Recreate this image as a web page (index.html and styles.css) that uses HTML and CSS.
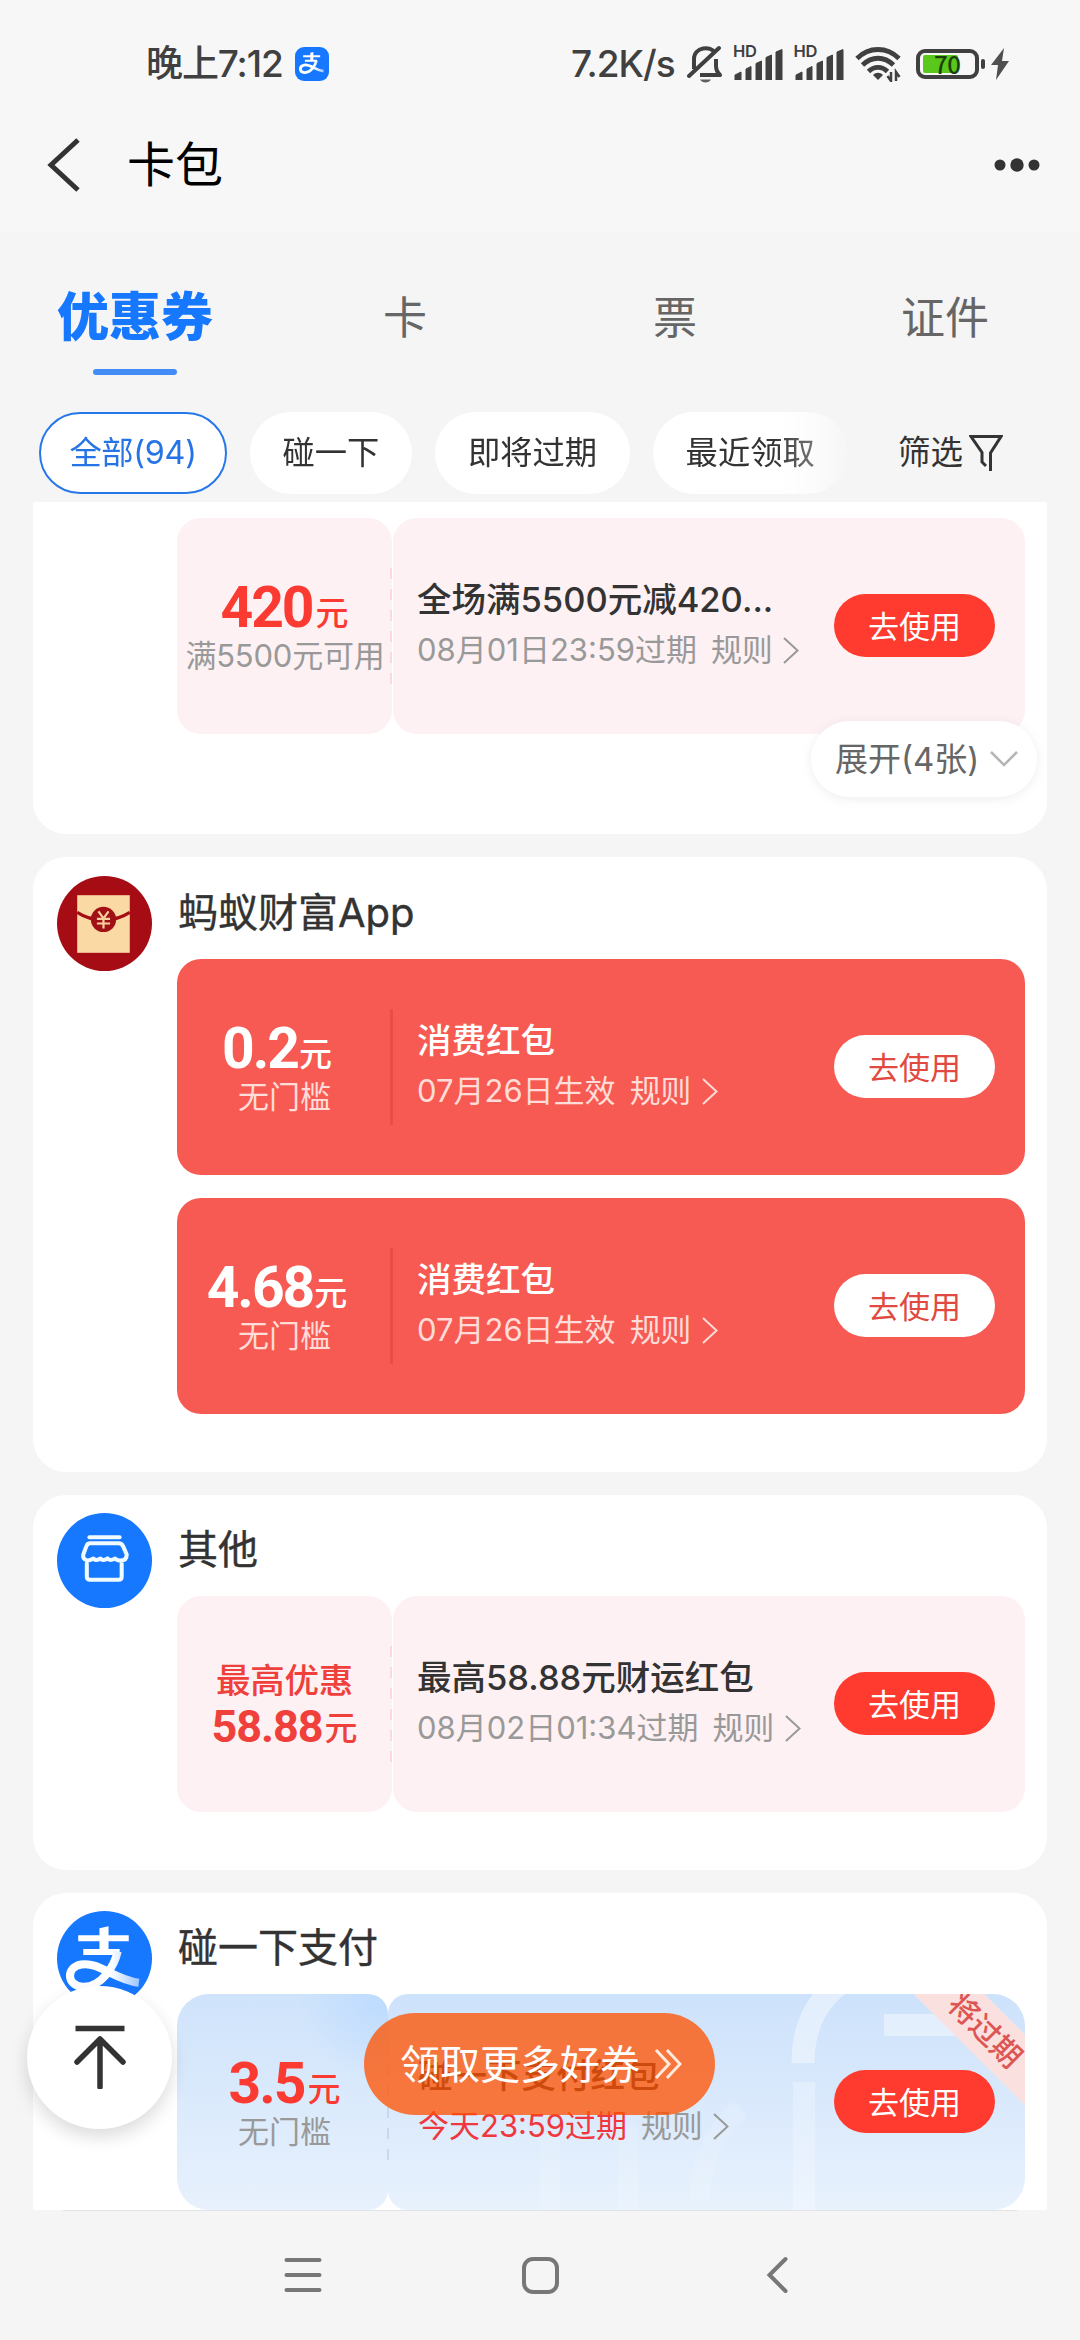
FILE: index.html
```html
<!DOCTYPE html>
<html lang="zh-CN">
<head>
<meta charset="utf-8">
<title>卡包</title>
<link rel="stylesheet" href="styles.css">
</head>
<body>
<svg class="defs" width="0" height="0" aria-hidden="true">
  <defs>
    <linearGradient id="tail" x1="0" y1="0" x2="1" y2="0"><stop offset="0.6" stop-color="#fff"/><stop offset="1" stop-color="#9fc6ff"/></linearGradient>
    <symbol id="alipay" viewBox="0 0 94 94">
      <path d="M21 27H71M26 40.5H62" fill="none" stroke="#fff" stroke-width="6"/>
      <path d="M42 17L51 15V40H42Z" fill="#fff"/>
      <path d="M60 40C57 54 44 76 25 75C10 74 8 56 24 53C42 50 56 68 81 71" fill="none" stroke="url(#tail)" stroke-width="8"/>
    </symbol>
    <symbol id="chev" viewBox="0 0 16 27"><path d="M1 1L14.500 13.500L1 26" fill="none" stroke="currentColor" stroke-width="2"/></symbol>
    <symbol id="signal" viewBox="0 0 50 34">
      <path d="M2 34V29L8 26V34ZM13 34V23L18 20.500V34ZM23 34V17.500L28.500 15V34ZM33 34V11.500L38.500 9V34ZM43 34V6L49 3.500V34Z" fill="#404040" stroke="#404040" stroke-linejoin="round"/>
    </symbol>
  </defs>
</svg>
<div class="screen">
  <header class="top">
    <div class="status">
      <span class="time">晚上7:12</span>
      <svg class="app" viewBox="0 0 34 34"><rect width="34" height="34" rx="9" fill="#1677ff"/><use href="#alipay" x="1" y="0" width="32" height="32"/></svg>
      <span class="speed">7.2K/s</span>
      <svg class="bell" viewBox="0 0 36 38" fill="none" stroke="#404040" stroke-width="4">
        <path d="M7 24V14C7 2 24 0 28 8M29 14V21C29 25 31 28 33 30H13" stroke-linejoin="round"/><path d="M2 31L32 3" stroke-linecap="round"/><path d="M13 34.500H24C22 38.500 15 38.500 13 34.500Z" fill="#606060" stroke="none"/>
      </svg>
      <span class="sig"><b>HD</b><svg viewBox="0 0 50 34"><use href="#signal"/></svg></span>
      <span class="sig"><b>HD</b><svg viewBox="0 0 50 34"><use href="#signal"/></svg></span>
      <svg class="wifi" viewBox="0 0 46 36" fill="none" stroke="#404040" stroke-width="4.800">
        <path d="M2 12.500C14 .500 32 .500 44 12.500M7.500 19C17 10 29 10 38.500 19M13.500 25.500C19 20 27 20 32.500 25.500"/><path d="M18 29C21 26 25 26 28 29L23 34Z" fill="#404040" stroke="none"/><path d="M36 26V35L32.500 30M41 35V26L44.500 31" stroke-width="2.500"/>
      </svg>
      <span class="battery"><i></i><em>70</em></span>
      <svg class="bolt" viewBox="0 0 18 32"><path d="M13 0L0 17H7L5 32L18 13H11Z" fill="#505050"/></svg>
    </div>
    <div class="titlebar">
      <svg class="back" viewBox="0 0 34 54"><path d="M31 2L4 27L31 52" fill="none" stroke="#333" stroke-width="5"/></svg>
      <h1>卡包</h1>
      <svg class="more" viewBox="0 0 48 14" fill="#333"><circle cx="7" cy="7" r="5.500"/><circle cx="24" cy="7" r="6.700"/><circle cx="41" cy="7" r="5.500"/></svg>
    </div>
  </header>
  <nav class="tabs">
    <span class="tab on">优惠券</span><span class="tab">卡</span><span class="tab">票</span><span class="tab">证件</span>
  </nav>
  <div class="filters">
    <div class="chips"><span class="chip on">全部(94)</span><span class="chip">碰一下</span><span class="chip">即将过期</span><span class="chip">最近领取</span></div>
    <span class="filter">筛选<svg viewBox="0 0 34 38" fill="none" stroke="#333" stroke-width="3"><path d="M21.500 37V19L32 2.500H2L13 18.500V28L17 32"/></svg></span>
  </div>
  <main class="list">
    <section class="card first">
      <div class="body">
        <article class="coupon pink">
          <div class="left"><p class="amt"><b>420</b>元</p><p class="cond wide">满5500元可用</p></div>
          <div class="right">
            <div class="info"><h3>全场满5500元减420...</h3><p>08月01日23:59过期<span>规则</span><svg><use href="#chev"/></svg></p></div>
            <button>去使用</button>
          </div>
          <i class="rule"></i>
          <a class="expand">展开(4张)<svg viewBox="0 0 28 16"><path d="M1 1L14 14L27 1" fill="none" stroke="#b5b5b5" stroke-width="2.500"/></svg></a>
        </article>
      </div>
    </section>
    <section class="card low">
      <svg class="avatar" viewBox="0 0 94 94">
        <circle cx="47" cy="47" r="47" fill="#a60c13"/><rect x="20" y="19" width="52" height="57" fill="#fbd9a5"/>
        <path d="M20 36C35 46 57 46 72 36" fill="none" stroke="#a60c13" stroke-width="3"/><circle cx="46" cy="43" r="12.500" fill="#a01015"/>
        <path d="M41 35L46 42L51 35M46 42V52M39.500 42.500H52.500M39.500 47H52.500" fill="none" stroke="#f5cf9e" stroke-width="2.200"/>
      </svg>
      <div class="body">
        <h2>蚂蚁财富App</h2>
        <article class="coupon red">
          <div class="left"><p class="amt"><b>0.2</b>元</p><p class="cond">无门槛</p></div>
          <div class="right">
            <div class="info"><h3>消费红包</h3><p>07月26日生效<span>规则</span><svg><use href="#chev"/></svg></p></div>
            <button>去使用</button>
          </div>
          <i class="rule"></i>
        </article>
        <article class="coupon red">
          <div class="left"><p class="amt"><b>4.68</b>元</p><p class="cond">无门槛</p></div>
          <div class="right">
            <div class="info"><h3>消费红包</h3><p>07月26日生效<span>规则</span><svg><use href="#chev"/></svg></p></div>
            <button>去使用</button>
          </div>
          <i class="rule"></i>
        </article>
      </div>
    </section>
    <section class="card">
      <svg class="avatar" viewBox="0 0 94 94"><circle cx="47" cy="47" r="47" fill="#1677ff"/>
        <g fill="none" stroke="#f0fbff" stroke-width="4" stroke-linecap="round" stroke-linejoin="round"><path d="M32 24H62M33 30H61Q64 30 65.500 33L69 41Q69 47 63 47Q59 47 57.500 45Q52 48 50 45Q46 48 43 45Q39 48 36 45Q33 47 30 47Q25 46 26 41L29 33Q30 30 33 30ZM29.500 50V63Q29.500 66 33 66H61Q64 66 64 63V50"/></g>
      </svg>
      <div class="body">
        <h2>其他</h2>
        <article class="coupon pink">
          <div class="left max"><p class="label">最高优惠</p><p class="amt"><b>58.88</b>元</p></div>
          <div class="right">
            <div class="info"><h3>最高58.88元财运红包</h3><p>08月02日01:34过期<span>规则</span><svg><use href="#chev"/></svg></p></div>
            <button>去使用</button>
          </div>
          <i class="rule"></i>
        </article>
      </div>
    </section>
    <section class="card last">
      <svg class="avatar" viewBox="0 0 94 94"><circle cx="47" cy="47" r="47" fill="#1677ff"/><use href="#alipay" width="94" height="94"/></svg>
      <div class="body">
        <h2>碰一下支付</h2>
        <article class="coupon blue">
          <div class="left"><p class="amt"><b>3.5</b>元</p><p class="cond">无门槛</p></div>
          <div class="right">
            <svg class="decor" viewBox="0 0 637 216" fill="none" stroke="#fff">
              <g stroke-opacity=".42"><path d="M415 69C415 30 430 5 454 -12" stroke-width="23"/><path d="M416 88V216" stroke-width="22" stroke-opacity=".25"/><path d="M496 31H590" stroke-width="22"/></g>
              <g stroke-opacity=".14" stroke-width="20"><path d="M162 140V216M240 130V216M352 115Q312 150 312 206"/></g>
            </svg>
            <div class="info"><h3>碰一下支付红包</h3><p><strong>今天23:59过期</strong><span>规则</span><svg><use href="#chev"/></svg></p></div>
            <button>去使用</button>
            <em class="ribbon">将过期</em>
          </div>
          <i class="rule"></i>
        </article>
      </div>
    </section>
  </main>
  <footer class="sysnav">
    <svg viewBox="0 0 40 40"><path d="M3.500 5H36.500M3.500 20H36.500M3.500 35H36.500"/></svg>
    <svg viewBox="0 0 40 40"><rect x="4" y="4" width="33" height="33" rx="9"/></svg>
    <svg viewBox="0 0 40 40"><path d="M28.500 4L12.500 20L28.500 36"/></svg>
  </footer>
  <a class="totop"><svg viewBox="0 0 54 66"><path d="M2.500 5.500H51.500" stroke-linecap="butt"/><path d="M27 64V16M4 39L27 16L50 39"/></svg></a>
  <a class="getmore">领取更多好券<svg viewBox="0 0 28 30"><path d="M2 1L15 15L2 29M13 1L26 15L13 29"/></svg></a>
</div>
</body>
</html>
```

FILE: styles.css
```css
* { box-sizing: border-box; margin: 0; padding: 0; }
html, body { width: 1080px; height: 2340px; overflow: hidden; }
body { font-family: Inter, "Noto Sans CJK SC", sans-serif; background: #f5f5f5; color: #333; }
.defs { display: block; position: absolute; }
i, em { font-style: normal; }
svg { display: block; flex: none; }
p, span, h1, h2, h3, a, button { white-space: nowrap; }
.screen { position: relative; width: 1080px; height: 2340px; display: flex; flex-direction: column; overflow: hidden; }

.top { height: 232px; background: #f7f7f7; flex: none; }
.status { height: 128px; padding-left: 146px; display: flex; align-items: center; color: #404040; }
.time { font-size: 37px; font-weight: 500; letter-spacing: -1.1px; width: 149px; line-height: 50px; }
.app { width: 34px; height: 34px; }
.speed { margin-left: 242px; width: 116px; font-size: 37px; font-weight: 500; letter-spacing: -1px; line-height: 50px; }
.bell { width: 36px; height: 38px; margin-right: 10px; }
.sig { position: relative; width: 50px; height: 34px; margin-right: 10.5px; margin-bottom: 2px; }
.sig svg { width: 50px; height: 34px; }
.sig b { position: absolute; left: 0; top: -3px; font: 600 16.5px/16px Inter, sans-serif; letter-spacing: -.4px; }
.wifi { width: 46px; height: 36px; margin: 0 15px 0 1px; }
.battery { position: relative; width: 63px; height: 30px; border: 4px solid #404040; border-radius: 9px; padding: 3px; margin-right: 12px; }
.battery::after { content: ""; position: absolute; right: -10px; top: 6px; width: 4px; height: 10px; border-radius: 2px; background: #404040; }
.battery i { display: block; width: 35px; height: 18px; margin-top: -1px; border-radius: 2px; background: #5ac81b; }
.battery em { position: absolute; left: 14px; top: -1px; font: 500 24px/24px "Noto Sans CJK SC", sans-serif; color: #1d3f0c; letter-spacing: -.5px; }
.bolt { width: 18px; height: 32px; }
.titlebar { height: 74px; display: flex; align-items: center; padding-left: 47px; }
.back { width: 34px; height: 54px; }
h1 { margin-left: 46px; font-size: 48px; font-weight: 400; line-height: 60px; color: #000; flex: 1; }
.more { width: 48px; height: 14px; margin-right: 39px; }

.tabs { height: 164px; padding-top: 42px; flex: none; display: grid; grid-template-columns: repeat(4, 270px); text-align: center; font-family: "Noto Sans CJK SC", sans-serif; font-size: 44px; line-height: 82px; color: #666; }
.tab.on { color: #1677ff; font-size: 52px; font-weight: 900; line-height: 79px; }
.tab.on::after { content: ""; display: block; width: 84px; height: 6px; margin: 16px auto 0; border-radius: 3px; background: #438cf5; }

.filters { height: 106px; flex: none; display: flex; align-items: flex-start; padding: 16px 0 0 39px; }
.chips { display: flex; gap: 22.5px; width: 827px; -webkit-mask-image: linear-gradient(90deg, #000 735px, rgba(0,0,0,.65) 776px, rgba(0,0,0,.15) 808px); mask-image: linear-gradient(90deg, #000 735px, rgba(0,0,0,.65) 776px, rgba(0,0,0,.15) 808px); }
.chip { height: 82px; border-radius: 41px; background: #fff; padding: 0 33px; font-size: 32.3px; line-height: 82px; flex: none; }
.chip.on { border: 2.5px solid #2678ea; color: #2673e6; line-height: 77px; width: 188px; padding: 0; text-align: center; letter-spacing: -.3px; }
.filter { margin-left: 32px; font-size: 32.5px; line-height: 82px; display: flex; align-items: center; gap: 6px; }
.filter svg { width: 34px; height: 38px; }

.list { height: 1708px; flex: none; overflow: hidden; padding: 0 33px; display: flex; flex-direction: column; gap: 23px; }
.card { flex: none; background: #fff; border-radius: 33px; display: flex; padding: 0 22px 58px 24px; }
.card.first { height: 332px; border-radius: 0 0 33px 33px; padding: 16px 22px 0 144px; }
.avatar { width: 95px; height: 95px; margin: 18px 25px 0 0; }
.low .avatar { margin-top: 19px; }
.body { width: 848px; display: flex; flex-direction: column; gap: 23px; }
h2 { height: 101px; margin-bottom: -23px; padding: 7px 0 0 1px; font-size: 40px; line-height: 96px; font-weight: 400; -webkit-text-stroke: .4px; }
.low h2 { height: 102px; padding-top: 8px; }

.coupon { position: relative; height: 216px; display: flex; }
.left { width: 215px; padding-top: 64px; border-radius: 24px; text-align: center; }
.right { position: relative; flex: 1; border-radius: 24px; display: flex; align-items: center; padding: 0 30px 2px 24px; }
.amt { height: 50px; display: flex; justify-content: center; align-items: baseline; line-height: 50px; font-size: 33px; font-weight: 500; margin-top: -1.5px; margin-bottom: 1.5px; }
.amt b { position: relative; top: 2px; font: 700 57px/50px Roboto, sans-serif; letter-spacing: -2px; margin-right: 3px; }
.cond { font-size: 31px; line-height: 48px; color: #999; }
.cond.wide { margin: 0 -10px; padding-left: 1px; letter-spacing: -.2px; }
.info { flex: 1; }
h3 { font-size: 34.5px; line-height: 50px; font-weight: 500; color: #333; }
.info p { display: flex; align-items: center; font-size: 31px; line-height: 50px; color: #999; }
.info p span { margin-left: 14px; letter-spacing: -.3px; }
.info p svg { width: 16px; height: 27px; margin-left: 11px; }
button { width: 161px; height: 63px; border: 0; border-radius: 32px; background: #ff3a2e; color: #fff; font: 400 31px/59px "Noto Sans CJK SC", sans-serif; padding-bottom: 2px; }
.rule { position: absolute; left: 213px; top: 50px; width: 2px; height: 116px; background: repeating-linear-gradient(#fbd9dc 0 11px, transparent 11px 21px); }

.pink .left, .pink .right { background: #fdf1f3; }
.pink .right { margin-left: 1px; }
.pink .amt, .blue .amt { color: #fb3a32; }
.max .label { font-size: 34.5px; font-weight: 500; line-height: 46px; margin-top: -2px; color: #f0403b; letter-spacing: -.2px; }
.max .amt { height: 46px; line-height: 46px; color: #f0403b; margin-top: -2px; }
.max .amt b { font: 700 45px/46px Roboto, sans-serif; letter-spacing: -1.1px; margin-right: 2px; }

.red { background: #f75a53; border-radius: 24px; }
.red .right { padding-left: 25px; }
.red h3, .red .amt { color: #fff; }
.red .amt { padding-right: 15px; }
.red .amt b { margin-right: 1px; }
.red .cond, .red .info p { color: #ffdcd7; }
.red button { background: #fff; color: #e04a40; }
.red .rule { width: 3px; background: #ea4c47; }

.blue .left { width: 211px; border-radius: 32px 20px 20px 32px; background: radial-gradient(circle at 100% 0, #bcdbff 0, rgba(188,219,255,0) 90px), linear-gradient(#cfe3fb, #dcebfc 55%, #e8f1fd); }
.blue .left .cond, .blue .left .amt { margin-right: -4px; }
.blue .right { overflow: hidden; border-radius: 20px 32px 32px 20px; padding-left: 30px; background: linear-gradient(#cde2fb, #dbeafc 55%, #e8f2fd); }
.blue .rule { left: 210px; background: repeating-linear-gradient(#c8d9ee 0 11px, transparent 11px 21px); }
.blue .info { position: relative; }
.blue strong { font-weight: 400; color: #f0373d; }
.decor { position: absolute; left: 0; top: 0; width: 637px; height: 216px; }
.ribbon { position: absolute; left: 468px; top: 12px; width: 260px; height: 50px; transform: rotate(45deg); background: #fae1df; color: #dd5653; font-size: 30px; font-weight: 500; line-height: 51px; padding-left: 84px; }

.expand { position: absolute; left: 634px; top: 203px; width: 226px; height: 76px; border-radius: 38px; background: #fff; box-shadow: 0 2px 12px rgba(0,0,0,.07); display: flex; align-items: center; gap: 11px; padding-left: 24px; font-size: 33px; color: #666; line-height: 76px; }
.expand svg { width: 28px; height: 16px; }

.sysnav { flex: 1; border-top: 1px solid #e0e2e5; margin: 0 63px; display: flex; justify-content: center; gap: 197px; padding-top: 44px; }
.sysnav svg { width: 40px; height: 40px; fill: none; stroke: #777; stroke-width: 4; stroke-linecap: round; }

.totop { position: absolute; left: 27px; top: 1986px; width: 145px; height: 143px; border-radius: 50%; background: #fff; box-shadow: 0 8px 18px rgba(0,0,0,.14); display: flex; align-items: center; justify-content: center; padding-bottom: 4px; }
.totop svg { width: 54px; height: 66px; fill: none; stroke: #333; stroke-width: 5.5; stroke-linecap: round; stroke-linejoin: round; }
.getmore { position: absolute; left: 364px; top: 2013px; width: 351px; height: 102px; border-radius: 51px; background: rgba(255,82,0,.76); color: #fff; font-size: 40px; line-height: 101px; padding-left: 36px; display: flex; align-items: center; gap: 14px; }
.getmore svg { width: 28px; height: 30px; fill: none; stroke: #ffe9dc; stroke-width: 3; }
```
